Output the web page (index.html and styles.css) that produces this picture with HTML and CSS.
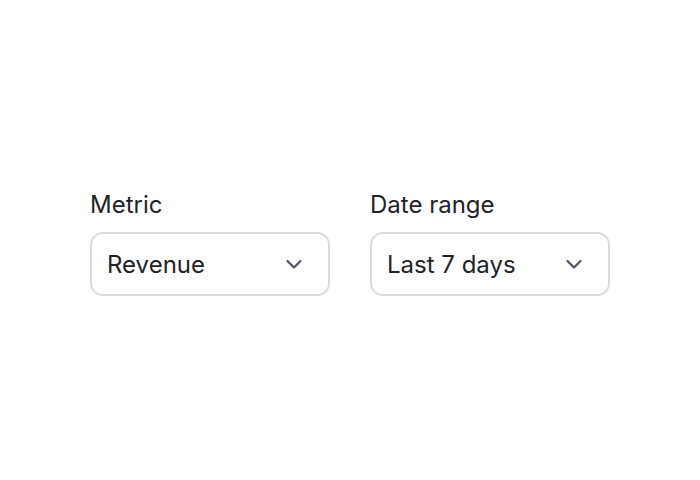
FILE: index.html
```html
<!DOCTYPE html>
<html>
<head>
<meta charset="utf-8">
<link rel="stylesheet" href="styles.css">
</head>
<body>
<div class="page">
  <div class="filters">
    <div class="field">
      <div class="label">Metric</div>
      <div class="select">
        <span class="value">Revenue</span>
        <svg class="chev" width="22" height="22" viewBox="0 0 22 22" fill="none"><path d="M4.5 8l6.5 6.5 6.5-6.5" stroke="#4b5563" stroke-width="2.2" stroke-linecap="round" stroke-linejoin="round"/></svg>
      </div>
    </div>
    <div class="field">
      <div class="label">Date range</div>
      <div class="select">
        <span class="value">Last 7 days</span>
        <svg class="chev" width="22" height="22" viewBox="0 0 22 22" fill="none"><path d="M4.5 8l6.5 6.5 6.5-6.5" stroke="#4b5563" stroke-width="2.2" stroke-linecap="round" stroke-linejoin="round"/></svg>
      </div>
    </div>
  </div>
</div>
</body>
</html>
```
FILE: styles.css
```css
html, body {
  margin: 0;
  padding: 0;
  background: #ffffff;
}
body {
  font-family: Inter, "Noto Sans", sans-serif;
  color: #1f2328;
}
.page {
  width: 700px;
  height: 480px;
  display: flex;
  align-items: center;
  justify-content: center;
}
.filters {
  display: flex;
  gap: 40px;
  margin-top: 7px;
}
.field {
  display: flex;
  flex-direction: column;
  gap: 13px;
  width: 240px;
}
.label {
  font-size: 24px;
  line-height: 28px;
  color: #1f2328;
}
.select {
  box-sizing: border-box;
  height: 64px;
  border: 2px solid #d9dcdf;
  border-radius: 13px;
  display: flex;
  align-items: center;
  justify-content: space-between;
  padding: 0 23px 0 15px;
}
.value {
  font-size: 24px;
  color: #1f2328;
}
.chev {
  display: block;
}
```
